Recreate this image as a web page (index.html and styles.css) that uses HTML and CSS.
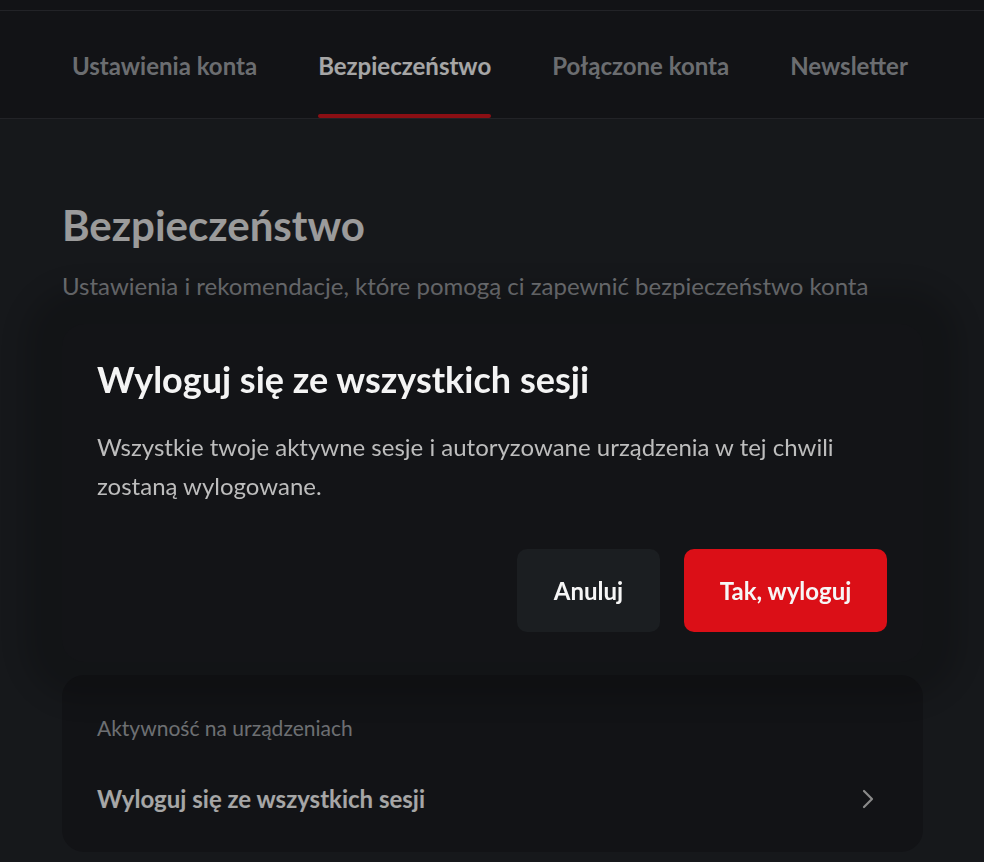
FILE: index.html
```html
<!DOCTYPE html>
<html lang="pl">
<head>
    <meta charset="UTF-8">
    <meta name="viewport" content="width=device-width, initial-scale=1.0">
    <title>Bezpieczeństwo</title>
    <link rel="stylesheet" href="styles.css">
</head>
<body>
    <div class="topbar"></div>
    <nav class="tabs">
        <a class="tab" href="#">Ustawienia konta</a>
        <a class="tab active" href="#">Bezpieczeństwo</a>
        <a class="tab" href="#">Połączone konta</a>
        <a class="tab" href="#">Newsletter</a>
    </nav>
    <main class="content">
        <h1>Bezpieczeństwo</h1>
        <p class="subtitle">Ustawienia i rekomendacje, które pomogą ci zapewnić bezpieczeństwo konta</p>
        <section class="card">
            <div class="card-label">Aktywność na urządzeniach</div>
            <a class="card-row" href="#">
                <span>Wyloguj się ze wszystkich sesji</span>
                <svg class="chevron" width="14" height="22" viewBox="0 0 14 22">
                    <polyline points="3,3 11,11 3,19" fill="none" stroke="currentColor" stroke-width="2.2" stroke-linecap="round" stroke-linejoin="round"/>
                </svg>
            </a>
        </section>
    </main>

    <div class="overlay"></div>
    <div class="modal">
        <h2>Wyloguj się ze wszystkich sesji</h2>
        <p>Wszystkie twoje aktywne sesje i autoryzowane urządzenia w tej chwili zostaną wylogowane.</p>
        <div class="modal-actions">
            <button class="btn btn-cancel">Anuluj</button>
            <button class="btn btn-danger">Tak, wyloguj</button>
        </div>
    </div>
</body>
</html>
```

FILE: styles.css
```css
body {
    background-color: #23252a;
    color: #eeeeee;
    font-family: Lato, "Open Sans", sans-serif;
    margin: 0;
    height: 862px;
    overflow: hidden;
}
.topbar {
    height: 10px;
    background-color: #1c1e22;
    border-bottom: 1px solid #35373c;
}
.tabs {
    display: flex;
    gap: 61px;
    padding-left: 72px;
    background-color: #1c1e22;
    border-bottom: 1px solid #35373c;
}
.tab {
    color: #a5a8ad;
    text-decoration: none;
    font-size: 24px;
    font-weight: 700;
    line-height: 28px;
    padding-top: 41px;
}
.tab::after {
    content: "";
    display: block;
    height: 4px;
    margin-top: 34px;
    border-radius: 2px;
}
.tab.active {
    color: #ffffff;
}
.tab.active::after {
    background-color: #d6171f;
}
.content {
    padding: 82px 61px 0 62px;
}
.content h1 {
    font-size: 42px;
    font-weight: 700;
    line-height: 48px;
    margin: 0;
    color: #eeeeee;
}
.subtitle {
    font-size: 24px;
    line-height: 28px;
    margin: 23px 0 0;
    color: #a8abb0;
}
.card {
    margin-top: 375px;
    background-color: #1c1e22;
    border-radius: 22px;
    padding: 41px 48px 39px 35px;
}
.card-label {
    font-size: 21px;
    line-height: 24px;
    color: #a8abb0;
}
.card-row {
    display: flex;
    justify-content: space-between;
    align-items: center;
    margin-top: 45px;
    color: #ffffff;
    text-decoration: none;
    font-size: 24px;
    font-weight: 700;
    line-height: 28px;
}
.chevron {
    color: #d5d5d5;
}
.overlay {
    position: fixed;
    inset: 0;
    background-color: rgba(0, 0, 0, 0.35);
}
.modal {
    position: absolute;
    left: 62px;
    top: 324px;
    width: 861px;
    box-sizing: border-box;
    padding: 33px 36px 30px 35px;
    background-color: #131417;
    border-radius: 22px;
    box-shadow: 0 0 24px 38px rgba(0, 0, 0, 0.16);
}
.modal h2 {
    font-size: 36px;
    font-weight: 700;
    line-height: 44px;
    margin: 0;
    color: #f4f4f4;
}
.modal p {
    font-size: 24px;
    line-height: 39px;
    margin: 26px 0 0;
    color: #bdbdbd;
}
.modal-actions {
    display: flex;
    justify-content: flex-end;
    gap: 24px;
    margin-top: 44px;
}
.btn {
    font-family: Lato, "Open Sans", sans-serif;
    font-size: 24px;
    font-weight: 700;
    color: #f6f6f6;
    border: none;
    border-radius: 10px;
    height: 83px;
    cursor: pointer;
}
.btn-cancel {
    background-color: #1b1e21;
    width: 143px;
}
.btn-danger {
    background-color: #db0f17;
    width: 203px;
}
```
